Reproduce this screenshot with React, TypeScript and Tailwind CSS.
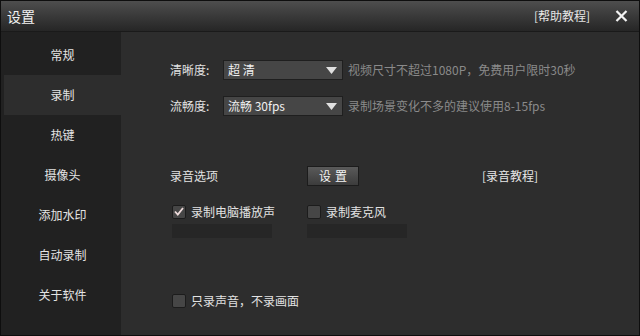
import React from "react"

const font = { fontFamily: '"Noto Sans CJK SC", "Noto Sans", sans-serif' }

const navItems = ["常规", "录制", "热键", "摄像头", "添加水印", "自动录制", "关于软件"]

const Caret = () => (
  <svg width="11" height="7" viewBox="0 0 11 7" className="shrink-0">
    <path d="M0 0 H11 L5.5 7 Z" fill="#e0e0e0" />
  </svg>
)

const Select = ({ value }: { value: string }) => (
  <div className="w-[120px] h-[20px] flex items-center justify-between pl-[4px] pr-[5px] bg-[#464646] border border-[#1f1f1f] text-[12px] text-[#f0f0f0]">
    <span className="whitespace-pre">{value}</span>
    <Caret />
  </div>
)

const Checkbox = ({ checked, label }: { checked?: boolean; label: string }) => (
  <div className="flex items-center gap-[5px] h-[15px]">
    <div className="w-[14px] h-[14px] rounded-[2px] bg-[#464646] border border-[#1c1c1c] flex items-center justify-center">
      {checked && (
        <svg width="10" height="9" viewBox="0 0 10 9">
          <path d="M1 4.5 L3.8 7.5 L9 1" fill="none" stroke="#efdcdc" strokeWidth="1.8" />
        </svg>
      )}
    </div>
    <span className="text-[12px] text-[#e2e2e2] leading-none">{label}</span>
  </div>
)

export default function App() {
  return (
    <div style={font} className="w-[640px] h-[336px] flex flex-col border border-[#0e0e0e] bg-[#2d2d2d] overflow-hidden">
      <div className="h-[31px] shrink-0 flex items-center pl-[6px] pr-[5px] bg-gradient-to-b from-[#4e4e4e] to-[#262626] border-b border-[#1a1a1a]">
        <span className="text-[14px] text-[#f2f2f2]">设置</span>
        <div className="flex-1" />
        <span className="text-[12px] text-[#e6e6e6] mr-[25px]">[帮助教程]</span>
        <svg width="13" height="12" viewBox="0 0 13 12" className="mr-[6px]">
          <path d="M1.5 1 L11.5 11 M11.5 1 L1.5 11" stroke="#f4f4f4" strokeWidth="2.2" />
        </svg>
      </div>

      <div className="flex flex-1 min-h-0">
        <div className="w-[120px] shrink-0 bg-[#212121] pt-[3px] pl-[3px]">
          {navItems.map((item, i) => (
            <div
              key={item}
              className={`h-[40px] flex items-center justify-center text-[12px] text-[#e4e4e4] ${i === 1 ? "bg-[#2d2d2d]" : ""}`}
            >
              {item}
            </div>
          ))}
        </div>

        <div className="flex-1 pl-[49px] pt-[28px] text-[12px]">
          <div className="flex items-center h-[20px]">
            <span className="w-[53px] text-[#e2e2e2]">清晰度:</span>
            <Select value="超 清" />
            <span className="ml-[5px] text-[#8a8a8a]">视频尺寸不超过1080P，免费用户限时30秒</span>
          </div>
          <div className="flex items-center h-[20px] mt-[16px]">
            <span className="w-[53px] text-[#e2e2e2]">流畅度:</span>
            <Select value="流畅 30fps" />
            <span className="ml-[5px] text-[#8a8a8a]">录制场景变化不多的建议使用8-15fps</span>
          </div>

          <div className="flex items-center h-[20px] mt-[50px]">
            <span className="w-[137px] text-[#e2e2e2]">录音选项</span>
            <button className="w-[52px] h-[20px] flex items-center justify-center bg-gradient-to-b from-[#5a5a5a] to-[#3c3c3c] border border-[#1c1c1c] text-[#f4f4f4] tracking-[4px] pl-[4px]">
              设置
            </button>
            <span className="ml-[123px] text-[#e6e6e6]">[录音教程]</span>
          </div>

          <div className="flex mt-[18px] pl-[2px]">
            <div className="w-[135px] flex flex-col gap-[5px]">
              <Checkbox checked label="录制电脑播放声" />
              <div className="w-[100px] h-[14px] bg-[#262626]" />
            </div>
            <div className="flex flex-col gap-[5px]">
              <Checkbox label="录制麦克风" />
              <div className="w-[100px] h-[14px] bg-[#262626]" />
            </div>
          </div>

          <div className="mt-[55px] pl-[2px]">
            <Checkbox label="只录声音，不录画面" />
          </div>
        </div>
      </div>
    </div>
  )
}
